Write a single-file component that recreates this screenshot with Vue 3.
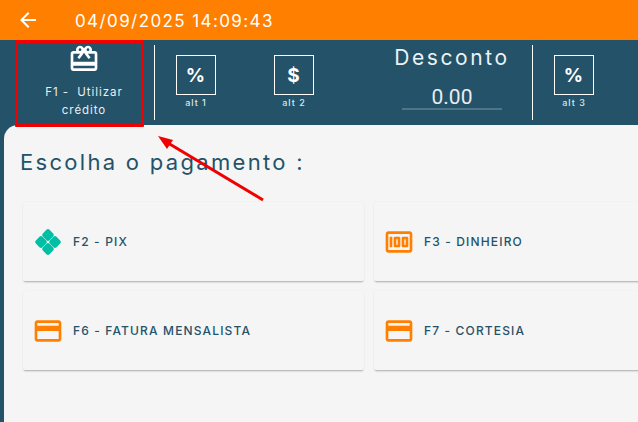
<script setup>
const pagamentos = [
  { id: 'pix', label: 'F2 - PIX' },
  { id: 'dinheiro', label: 'F3 - DINHEIRO' },
  { id: 'fatura', label: 'F6 - FATURA MENSALISTA' },
  { id: 'cortesia', label: 'F7 - CORTESIA' },
]
const cartao = 'M20 4H4c-1.11 0-1.99.89-1.99 2L2 18c0 1.11.89 2 2 2h16c1.11 0 2-.89 2-2V6c0-1.11-.89-2-2-2zm0 14H4v-6h16v6zm0-10H4V6h16v2z'
const dinheiro = 'M5 8h2v8H5zm7 0H9c-.55 0-1 .45-1 1v6c0 .55.45 1 1 1h3c.55 0 1-.45 1-1V9c0-.55-.45-1-1-1zm-1 6h-1v-4h1v4zm7-6h-3c-.55 0-1 .45-1 1v6c0 .55.45 1 1 1h3c.55 0 1-.45 1-1V9c0-.55-.45-1-1-1zm-1 6h-1v-4h1v4zM20 4H4c-1.1 0-2 .9-2 2v12c0 1.1.9 2 2 2h16c1.1 0 2-.9 2-2V6c0-1.1-.9-2-2-2zm0 14H4V6h16v12z'
</script>

<template>
  <div class="tela">
    <header class="topo">
      <svg class="voltar" viewBox="0 0 24 24" width="24" height="24">
        <path fill="#fff" d="M20 11H7.83l5.59-5.59L12 4l-8 8 8 8 1.41-1.41L7.83 13H20v-2z" />
      </svg>
      <span class="data">04/09/2025 14:09:43</span>
    </header>

    <div class="barra">
      <div class="credito">
        <svg viewBox="0 0 24 24" width="32" height="32">
          <path fill="#fff" d="M20 6h-2.18c.11-.31.18-.65.18-1 0-1.66-1.34-3-3-3-1.05 0-1.96.54-2.5 1.35l-.5.67-.5-.68C10.96 2.54 10.05 2 9 2 7.34 2 6 3.34 6 5c0 .35.07.69.18 1H4c-1.11 0-1.99.89-1.99 2L2 19c0 1.11.89 2 2 2h16c1.11 0 2-.89 2-2V8c0-1.11-.89-2-2-2zm-5-2c.55 0 1 .45 1 1s-.45 1-1 1-1-.45-1-1 .45-1 1-1zM9 4c.55 0 1 .45 1 1s-.45 1-1 1-1-.45-1-1 .45-1 1-1zm11 15H4v-2h16v2zm0-5H4V8h5.08L7 10.83 8.62 12 11 8.76l1-1.36 1 1.36L15.38 12 17 10.83 14.92 8H20v6z" />
        </svg>
        <span class="credito-txt">F1 -&nbsp; Utilizar crédito</span>
      </div>
      <div class="divisor"></div>
      <div class="alt alt1">
        <div class="caixa">%</div>
        <span>alt 1</span>
      </div>
      <div class="alt alt2">
        <div class="caixa">$</div>
        <span>alt 2</span>
      </div>
      <div class="desconto">
        <span class="desc-titulo">Desconto</span>
        <span class="desc-valor">0.00</span>
      </div>
      <div class="divisor"></div>
      <div class="alt alt3">
        <div class="caixa">%</div>
        <span>alt 3</span>
      </div>
    </div>

    <main class="conteudo">
      <h2>Escolha o pagamento :</h2>
      <div class="grade">
        <div v-for="p in pagamentos" :key="p.id" class="cartao">
          <svg v-if="p.id === 'pix'" viewBox="0 0 32 32" width="32" height="32">
            <g fill="#00bfa5">
              <rect x="11.25" y="4.25" width="9.5" height="9.5" rx="2.2" transform="rotate(45 16 9)" />
              <rect x="11.25" y="18.25" width="9.5" height="9.5" rx="2.2" transform="rotate(45 16 23)" />
              <rect x="4.25" y="11.25" width="9.5" height="9.5" rx="2.2" transform="rotate(45 9 16)" />
              <rect x="18.25" y="11.25" width="9.5" height="9.5" rx="2.2" transform="rotate(45 23 16)" />
            </g>
          </svg>
          <svg v-else viewBox="0 0 24 24" width="32" height="32">
            <path fill="#ff8000" :d="p.id === 'dinheiro' ? dinheiro : cartao" />
          </svg>
          <span>{{ p.label }}</span>
        </div>
      </div>
    </main>

    <div class="destaque"></div>
    <svg class="seta" viewBox="0 0 638 422" width="638" height="422">
      <path d="M263 200 L168 143" stroke="#f00000" stroke-width="3" fill="none" />
      <path d="M158 136 L173 140 L167 149 Z" fill="#f00000" />
    </svg>
  </div>
</template>

<style scoped>
.tela {
  position: relative;
  width: 638px;
  height: 422px;
  overflow: hidden;
  background: #235269;
  font-family: "Inter", "Open Sans", sans-serif;
}
.topo {
  height: 40px;
  background: #ff8000;
  display: flex;
  align-items: center;
  padding-left: 16px;
  color: #fff;
}
.voltar {
  flex: none;
}
.data {
  margin-left: 35px;
  padding-top: 2px;
  font-size: 17px;
  letter-spacing: 1.4px;
}
.barra {
  height: 85px;
  display: flex;
  align-items: flex-start;
  padding-left: 16px;
  color: #fff;
}
.credito {
  width: 128px;
  height: 85px;
  display: flex;
  flex-direction: column;
  align-items: center;
  padding: 3px 0 0 8px;
  box-sizing: border-box;
}
.credito-txt {
  width: 100px;
  margin-top: 8px;
  font-size: 11.5px;
  line-height: 18px;
  letter-spacing: 0.95px;
  text-align: center;
  color: #e8eef1;
}
.divisor {
  width: 1px;
  height: 75px;
  margin: 5px 0 0 10px;
  background: #fff;
  flex: none;
}
.alt {
  width: 40px;
  padding-top: 15px;
  display: flex;
  flex-direction: column;
  align-items: center;
  font-size: 9px;
  font-weight: 500;
  letter-spacing: 1px;
  color: #dfe7ea;
}
.alt span {
  margin-top: 2px;
  line-height: 12px;
}
.alt1 {
  margin-left: 21px;
}
.alt2 {
  margin-left: 58px;
}
.alt3 {
  margin-left: 21px;
}
.caixa {
  width: 40px;
  height: 40px;
  box-sizing: border-box;
  border: 1px solid #fff;
  display: flex;
  align-items: center;
  justify-content: center;
  font-size: 19px;
  font-weight: 700;
  color: #fff;
}
.desconto {
  width: 140px;
  margin-left: 68px;
  margin-right: 0;
  display: flex;
  flex-direction: column;
  align-items: center;
}
.desc-titulo {
  margin-top: 4px;
  font-size: 21px;
  line-height: 27px;
  letter-spacing: 2.6px;
  color: #edf2f4;
}
.desc-valor {
  width: 100px;
  margin-top: 15px;
  font-family: "Roboto", sans-serif;
  font-size: 21px;
  line-height: 22px;
  text-align: center;
  color: #e8eef1;
  border-bottom: 2px solid #4f7488;
}
.conteudo {
  height: 297px;
  margin-left: 4px;
  background: #f5f5f5;
  border-radius: 14px 0 0 0;
  padding: 23px 0 0 16px;
  box-sizing: border-box;
}
h2 {
  margin: 0;
  font-size: 22px;
  line-height: 28px;
  font-weight: 400;
  letter-spacing: 2.3px;
  color: #235269;
}
.grade {
  margin: 26px 0 0 3px;
  display: grid;
  grid-template-columns: 341px 341px;
  grid-auto-rows: 79px;
  column-gap: 10px;
  row-gap: 10px;
}
.cartao {
  display: flex;
  align-items: center;
  gap: 9px;
  padding-left: 9px;
  background: #f5f5f5;
  border-radius: 2px;
  box-shadow: 0 2px 2px -1px rgba(0, 0, 0, 0.3), 0 0 2px rgba(0, 0, 0, 0.06);
  font-size: 12px;
  font-weight: 500;
  letter-spacing: 1.15px;
  color: #235269;
}
.destaque {
  position: absolute;
  left: 15px;
  top: 40px;
  width: 129px;
  height: 87px;
  box-sizing: border-box;
  border: 3px solid #f00000;
  border-radius: 1px;
}
.seta {
  position: absolute;
  left: 0;
  top: 0;
  pointer-events: none;
}
</style>
